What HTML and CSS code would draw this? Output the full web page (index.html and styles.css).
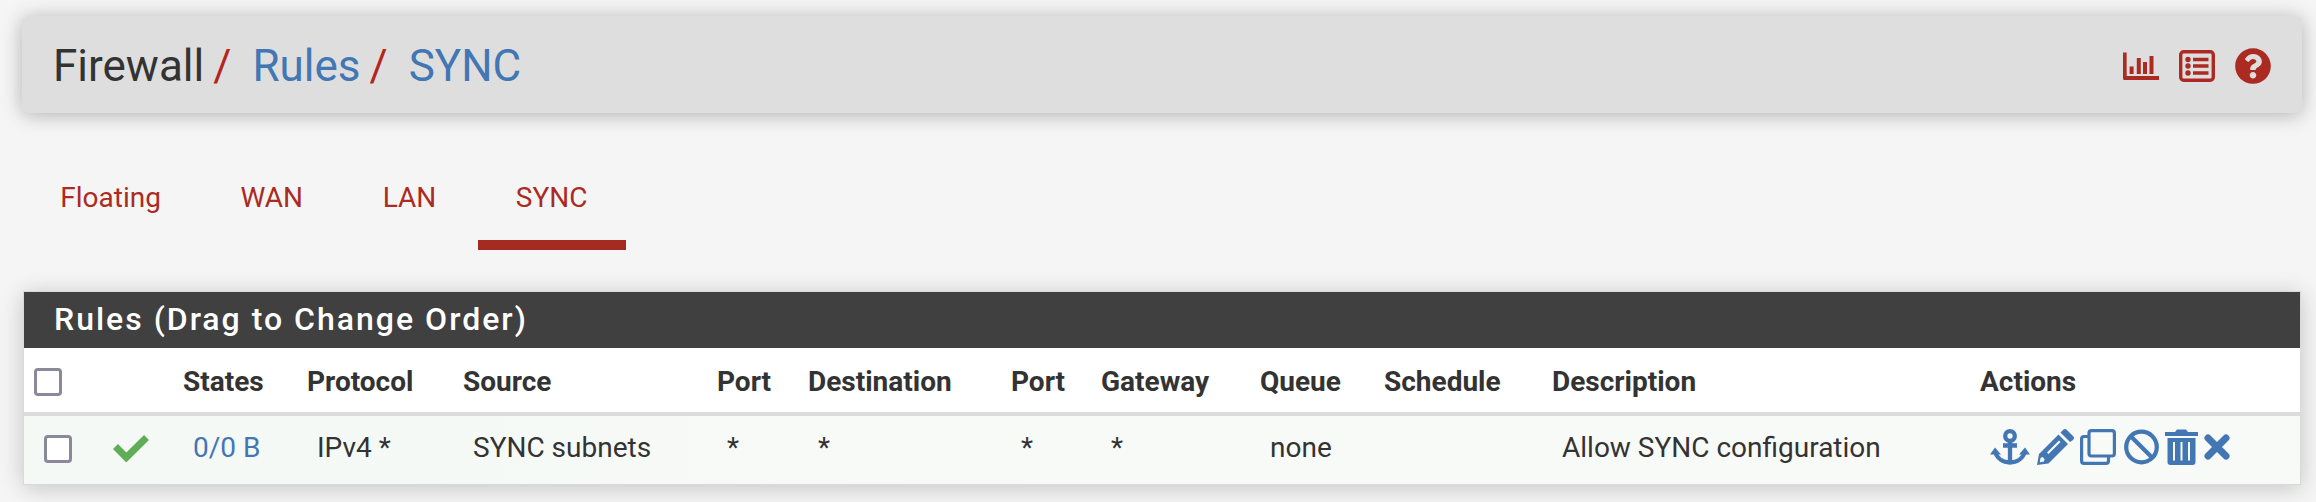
FILE: index.html
```html
<!DOCTYPE html>
<html lang="en">
<head>
<meta charset="utf-8">
<title>Firewall: Rules: SYNC</title>
<link rel="stylesheet" href="styles.css">
</head>
<body>
<header class="page-header">
  <ol class="breadcrumb">
    <li>Firewall<span class="sep">/</span></li>
    <li><a href="#">Rules</a><span class="sep">/</span></li>
    <li><a href="#">SYNC</a></li>
  </ol>
  <div class="header-icons">
    <svg width="36" height="28" viewBox="0 0 36 28"><path d="M1.75 0.500V26H36" fill="none" stroke="currentColor" stroke-width="3.800" stroke-linejoin="round"/><path d="M6.600 14.500h4v7.500h-4zM13.800 6h4v16h-4zM20 10h4v12h-4zM26.500 4h4v18h-4z" fill="currentColor"/></svg>
    <svg width="36" height="32" viewBox="0 0 36 32"><rect x="1.700" y="1.700" width="32.600" height="28.600" rx="3" fill="none" stroke="currentColor" stroke-width="3.400"/><path d="M14 9.500h15.500M14 16h15.500M14 23h15.500" stroke="currentColor" stroke-width="3.600"/><g fill="currentColor"><circle cx="9" cy="9.500" r="2.700"/><circle cx="9" cy="16" r="2.700"/><circle cx="9" cy="23" r="2.700"/></g></svg>
    <svg width="36" height="36" viewBox="6 6 500 500"><path fill="currentColor" d="M504 256c0 136.997-111.043 248-248 248S8 392.997 8 256C8 119.083 119.043 8 256 8s248 111.083 248 248zM262.655 90c-54.497 0-89.255 22.957-116.549 63.758-3.536 5.286-2.353 12.415 2.715 16.258l34.699 26.310c5.205 3.947 12.621 3.008 16.665-2.122 17.864-22.658 30.113-35.797 57.303-35.797 20.429 0 45.698 13.148 45.698 32.958 0 14.976-12.363 22.667-32.534 33.976C247.128 238.528 216 254.941 216 296v4c0 6.627 5.373 12 12 12h56c6.627 0 12-5.373 12-12v-1.333c0-28.462 83.186-29.647 83.186-106.667 0-58.002-60.165-102-116.531-102zM256 338c-25.365 0-46 20.635-46 46 0 25.364 20.635 46 46 46s46-20.636 46-46c0-25.364-20.635-46-46-46z"/></svg>
  </div>
</header>

<nav class="tabs">
  <a class="tab" href="#">Floating</a>
  <a class="tab" href="#">WAN</a>
  <a class="tab" href="#">LAN</a>
  <a class="tab active" href="#">SYNC</a>
</nav>

<section class="panel">
  <h2 class="panel-title">Rules (Drag to Change Order)</h2>
  <table class="rules">
    <colgroup>
      <col class="c-check"><col class="c-icon"><col class="c-states"><col class="c-proto"><col class="c-source"><col class="c-port"><col class="c-dest"><col class="c-port2"><col class="c-gateway"><col class="c-queue"><col class="c-schedule"><col class="c-desc"><col>
    </colgroup>
    <thead>
      <tr><th class="select"><span class="checkbox"></span></th><th></th><th>States</th><th>Protocol</th><th>Source</th><th>Port</th><th>Destination</th><th>Port</th><th>Gateway</th><th>Queue</th><th>Schedule</th><th>Description</th><th>Actions</th></tr>
    </thead>
    <tbody>
      <tr>
        <td class="select"><span class="checkbox"></span></td>
        <td><svg class="pass" width="36" height="28" viewBox="0 0 36 28"><path d="M2.500 12.500L13.300 23.500L33.500 3.500" fill="none" stroke="currentColor" stroke-width="7"/></svg></td>
        <td><a href="#">0/0 B</a></td><td>IPv4 *</td><td>SYNC subnets</td><td>*</td><td>*</td><td>*</td><td>*</td><td>none</td><td></td><td>Allow SYNC configuration</td>
        <td>
          <div class="actions">
            <svg width="40" height="36" viewBox="0 0 40 36"><g fill="none" stroke="currentColor" stroke-width="4.300"><circle cx="20" cy="7" r="4.800"/><path d="M20 12v22M13 16.500h14M5 22.500c2 7 8 11 15 11s13-4 15-11"/></g><path d="M0 25.500L5 18.500L11 25.500zM40 25.500L35 18.500L29 25.500z" fill="currentColor"/></svg>
            <svg class="pencil" width="37" height="36" viewBox="0 0 37 36"><path fill="currentColor" fill-rule="evenodd" d="M0 36L2 25L21.500 5.500L31 15L11.500 34.500zM10 23.500l1.500 1.500L23.500 13l-1.500-1.500zM3.500 29L2.800 33.200L7 32.500L7.500 30L5.500 28zM23.500 3.500L26 1q2-2 4 0L36 7q2 2 0 4L33 13z"/></svg>
            <svg class="clone" width="36" height="36" viewBox="0 0 36 36"><g fill="none" stroke="currentColor" stroke-width="3.200"><rect x="9" y="1.600" width="25.400" height="25.400" rx="2.500"/><path d="M8 7.500H4Q1.600 7.500 1.600 10V32Q1.600 34.400 4 34.400H26Q28.500 34.400 28.500 32V28"/></g></svg>
            <svg class="ban" width="35" height="36" viewBox="0 0 35 36"><g fill="none" stroke="currentColor" stroke-width="4.200"><circle cx="17.500" cy="18" r="15.300"/><path d="M6.500 7L28.500 29"/></g></svg>
            <svg class="trash" width="33" height="36" viewBox="0 0 33 36"><path fill="currentColor" fill-rule="evenodd" d="M0 3H10L12 .5H21L23 3H33V7H0zM2.500 9H30.500V33Q30.500 36 27.500 36H5.500Q2.500 36 2.500 33zM8 13V31.500H10V13zM15.500 13V31.500H17.500V13zM23 13V31.500H25V13z"/></svg>
            <svg class="times" width="26" height="26" viewBox="0 0 26 26"><path d="M4 4L22 22M22 4L4 22" stroke="currentColor" stroke-width="7" stroke-linecap="round"/></svg>
          </div>
        </td>
      </tr>
    </tbody>
  </table>
</section>
</body>
</html>
```
FILE: styles.css
```css
* { box-sizing: border-box; }

body {
  margin: 0;
  padding: 16px 14px 0 22px;
  height: 502px;
  overflow: hidden;
  background: #f5f5f5;
  color: #333;
  font: 28px/36px Roboto, sans-serif;
}

a { color: #4277b4; text-decoration: none; }

.page-header {
  display: flex;
  align-items: center;
  justify-content: space-between;
  height: 97px;
  padding: 2px 31px 0 31px;
  border-radius: 7px;
  background: #dedede;
  box-shadow: 0 2px 20px rgba(0, 0, 0, .28);
}

.breadcrumb {
  display: flex;
  gap: 21px;
  margin: 0;
  padding: 0;
  list-style: none;
  font-size: 44px;
  line-height: 50px;
}

.sep { padding-left: 9px; color: #b4251f; }

.header-icons {
  display: flex;
  align-items: center;
  gap: 20px;
  color: #ab2b22;
}

.header-icons svg { display: block; }

.tabs {
  display: flex;
  gap: 3px;
  height: 101px;
  margin-top: 36px;
}

.tab {
  padding: 31px 38.3px 0;
  border-bottom: 10px solid transparent;
  color: #ab2b22;
}

.tab.active { border-color: #a52b22; }

.panel {
  width: 2278px;
  margin: 41px 0 0 1px;
  border: 1px solid #d8dad9;
  background: #fff;
  box-shadow: 0 3px 22px rgba(0, 0, 0, .2);
}

.panel-title {
  height: 56px;
  margin: 0;
  padding-left: 30px;
  background: #404040;
  color: #fff;
  font-size: 32px;
  font-weight: 500;
  letter-spacing: 2px;
  line-height: 54px;
}

.rules {
  width: 100%;
  border-collapse: separate;
  border-spacing: 0;
  table-layout: fixed;
}

.rules th, .rules td { text-align: left; white-space: nowrap; }
.rules th { height: 68px; padding: 4px 0 0 11px; border-bottom: 4px solid #dcdcdc; font-weight: 700; }
.rules td { height: 68px; padding: 0 0 5px 21px; }
.rules tbody tr { background: linear-gradient(90deg, #f4f9f6, #f8faf7 50%); }
.rules th.select { padding-left: 10px; }
.rules td.select { padding: 0 0 3px 20px; }

.c-check { width: 68px; }
.c-icon { width: 80px; }
.c-states { width: 124px; }
.c-proto { width: 156px; }
.c-source { width: 254px; }
.c-port { width: 91px; }
.c-dest { width: 203px; }
.c-port2 { width: 90px; }
.c-gateway { width: 159px; }
.c-queue { width: 124px; }
.c-schedule { width: 168px; }
.c-desc { width: 428px; }

.checkbox {
  display: block;
  width: 28px;
  height: 28px;
  border: 3px solid #8a8999;
  border-radius: 4px;
  background: #fff;
}

.pass { display: block; color: #5fad56; }

.actions {
  display: flex;
  align-items: center;
  margin-bottom: 2px;
  color: #4277b4;
}

.actions svg { display: block; }
.pencil { margin-left: 7px; }
.clone { margin-left: 6px; }
.ban { margin-left: 8px; }
.trash { margin-left: 6px; }
.times { margin-left: 6px; }
```
